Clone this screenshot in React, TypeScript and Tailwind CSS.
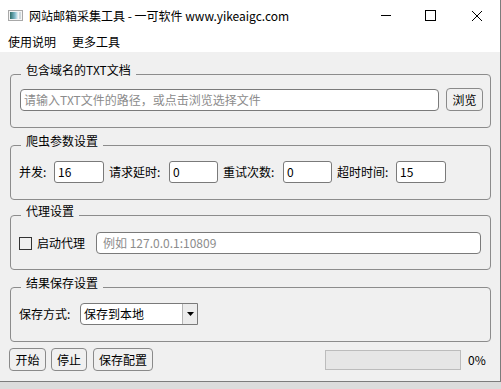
const font = { fontFamily: '"Noto Sans CJK SC", "Noto Sans", sans-serif' };

function Group({ title, top, height, children }: { title: string; top: string; height: string; children: React.ReactNode }) {
  return (
    <div className={`${top} ${height} ml-[10px] w-[481px] rounded-[4px] border border-[#8c8c8c]`}>
      <div className="-mt-[13px] ml-[10px] w-fit bg-[#f0f0f0] px-[5px] text-[12px] leading-[16px] text-black">{title}</div>
      {children}
    </div>
  );
}

function Field({ value, w }: { value: string; w: string }) {
  return (
    <div className={`${w} flex h-[22px] items-center rounded-[3px] border border-[#7a7a7a] bg-white pl-[3px] text-[12px] text-black`}>
      {value}
    </div>
  );
}

function Btn({ label, w }: { label: string; w: string }) {
  return (
    <button className={`${w} h-[23px] rounded-[4px] border border-[#8a8a8a] bg-[#f0f0f0] text-[12px] leading-none text-black`}>
      {label}
    </button>
  );
}

export default function App() {
  return (
    <div className="h-[389px] w-[501px] bg-[#dcdcdc]" style={font}>
      <div className="flex h-[382px] w-[501px] flex-col border-r border-b border-[#7c7c7c] bg-[#f0f0f0]">
        {/* title bar */}
        <div className="flex h-[31px] items-center bg-white">
          <svg className="ml-[8px]" width="15" height="11" viewBox="0 0 15 11">
            <defs>
              <linearGradient id="ic" x1="0" x2="1" y1="0" y2="0">
                <stop offset="0" stopColor="#2f6f6a" />
                <stop offset="0.6" stopColor="#7fb9c9" />
                <stop offset="1" stopColor="#e9f2f5" />
              </linearGradient>
            </defs>
            <rect x="0.5" y="0.5" width="14" height="10" fill="#f4f4f4" stroke="#a8a8a8" />
            <rect x="2" y="2" width="8" height="7" fill="url(#ic)" />
            <rect x="11" y="2" width="2" height="7" fill="#cfd8dc" />
          </svg>
          <span className="ml-[6px] text-[12px] text-black">网站邮箱采集工具 - 一可软件 www.yikeaigc.com</span>
          <div className="ml-auto flex h-full items-center">
            <svg width="46" height="31" viewBox="0 0 46 31"><line x1="19" y1="15.5" x2="29" y2="15.5" stroke="#000" /></svg>
            <svg width="46" height="31" viewBox="0 0 46 31"><rect x="17.5" y="10.5" width="10" height="10" fill="none" stroke="#000" /></svg>
            <svg width="46" height="31" viewBox="0 0 46 31"><path d="M18 11 L28 21 M28 11 L18 21" stroke="#000" strokeWidth="1" /></svg>
          </div>
        </div>
        {/* menu */}
        <div className="flex h-[21px] items-center bg-white text-[12px] text-black">
          <span className="ml-[8px]">使用说明</span>
          <span className="ml-[16px]">更多工具</span>
        </div>

        <Group title="包含域名的TXT文档" top="mt-[22px]" height="h-[54px]">
          <div className="mt-[10px] flex items-center pl-[9px]">
            <div className="flex h-[22px] w-[419px] items-center rounded-[4px] border border-[#7a7a7a] bg-white pl-[3px] text-[12px] text-[#8c8c8c]">
              请输入TXT文件的路径，或点击浏览选择文件
            </div>
            <Btn label="浏览" w="ml-[7px] w-[37px]" />
          </div>
        </Group>

        <Group title="爬虫参数设置" top="mt-[17px]" height="h-[55px]">
          <div className="mt-[12px] flex items-center pl-[8px] text-[12px] text-black">
            <span className="w-[35px]">并发:</span>
            <Field value="16" w="w-[50px]" />
            <span className="ml-[5px] w-[60px]">请求延时:</span>
            <Field value="0" w="w-[49px]" />
            <span className="ml-[5px] w-[60px]">重试次数:</span>
            <Field value="0" w="w-[49px]" />
            <span className="ml-[5px] w-[59px]">超时时间:</span>
            <Field value="15" w="w-[50px]" />
          </div>
        </Group>

        <Group title="代理设置" top="mt-[15px]" height="h-[55px]">
          <div className="mt-[13px] flex items-center pl-[8px] text-[12px] text-black">
            <div className="h-[13px] w-[13px] border border-[#333]" />
            <span className="ml-[5px] w-[59px]">启动代理</span>
            <div className="flex h-[22px] w-[385px] items-center rounded-[4px] border border-[#7a7a7a] bg-white pl-[6px] text-[12px] text-[#8c8c8c]">
              例如 127.0.0.1:10809
            </div>
          </div>
        </Group>

        <Group title="结果保存设置" top="mt-[17px]" height="h-[55px]">
          <div className="mt-[12px] flex items-center pl-[8px] text-[12px] text-black">
            <span className="w-[61px]">保存方式:</span>
            <div className="flex h-[22px] w-[118px] items-center rounded-l-[4px] border border-[#7a7a7a] bg-white">
              <span className="pl-[3px]">保存到本地</span>
              <div className="ml-auto flex h-full w-[15px] items-center justify-center border-l border-[#b5b5b5] bg-[#ececec]">
                <svg width="7" height="4" viewBox="0 0 7 4"><path d="M0 0 H7 L3.5 4 Z" fill="#000" /></svg>
              </div>
            </div>
          </div>
        </Group>

        <div className="mt-[6px] flex items-center pl-[9px] text-[12px] text-black">
          <Btn label="开始" w="w-[37px]" />
          <Btn label="停止" w="ml-[5px] w-[36px]" />
          <Btn label="保存配置" w="ml-[6px] w-[60px]" />
          <div className="ml-[172px] h-[20px] w-[136px] border border-[#bcbcbc] bg-[#e6e6e6]" />
          <span className="ml-[7px]">0%</span>
        </div>
      </div>
    </div>
  );
}
